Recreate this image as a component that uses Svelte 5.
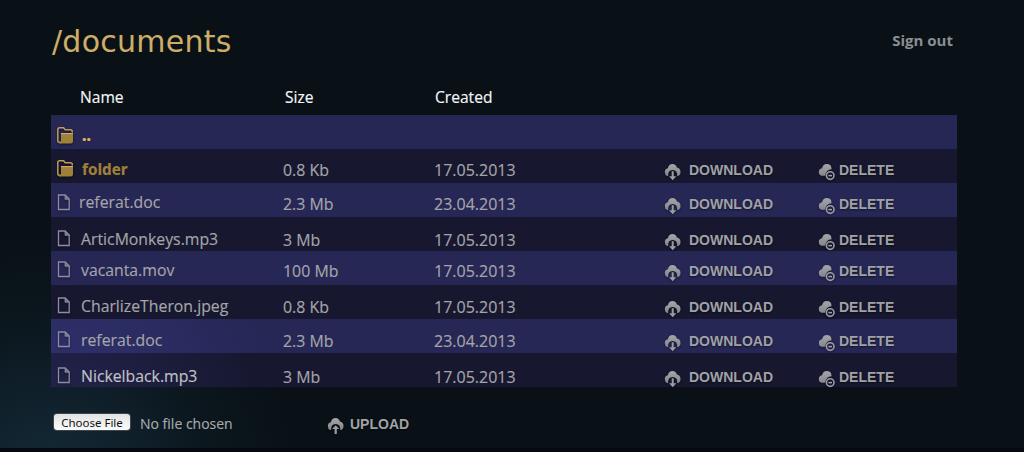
<script>
  const files = [
    { name: 'folder', kind: 'folder', size: '0.8 Kb', date: '17.05.2013', mid: 21, lift: 1, left: 31 },
    { name: 'referat.doc', kind: 'file', size: '2.3 Mb', date: '23.04.2013', mid: 21, lift: 2, left: 28 },
    { name: 'ArticMonkeys.mp3', kind: 'file', size: '3 Mb', date: '17.05.2013', mid: 23, lift: 1, left: 30 },
    { name: 'vacanta.mov', kind: 'file', size: '100 Mb', date: '17.05.2013', mid: 20, lift: 1, left: 30 },
    { name: 'CharlizeTheron.jpeg', kind: 'file', size: '0.8 Kb', date: '17.05.2013', mid: 22, lift: 1, left: 30 },
    { name: 'referat.doc', kind: 'file', size: '2.3 Mb', date: '23.04.2013', mid: 22, lift: 1, left: 30 },
    { name: 'Nickelback.mp3', kind: 'file bright', size: '3 Mb', date: '17.05.2013', mid: 24, lift: 1, left: 30 }
  ];
</script>

{#snippet folderIcon()}
  <svg class="folder-icon" width="18" height="18" viewBox="0 0 18 18">
    <path d="M4 15.5H2.6Q.8 15.5 .8 13.5V2.6Q.8 .8 2.6 .8H6.6L8.2 2.8H13.4Q15.3 2.8 15.3 4.8V5.5" fill="none" stroke="#bd9c53" stroke-width="1.5" />
    <path d="M4 6.3H16V14.2Q16 16.4 13.8 16.4H2.5Q1.6 16.2 1.6 14.6H4Z" fill="#a08138" />
    <path d="M4 6.6H16" stroke="#d3b76e" stroke-width="1" />
  </svg>
{/snippet}

{#snippet fileIcon()}
  <svg class="file-icon" width="14" height="18" viewBox="0 0 14 18">
    <path d="M1.5 1H8.2L12.2 5V15.5H1.5Z" fill="none" stroke="#8d8ca2" stroke-width="1.3" />
    <path d="M8 1V5.3H12.2Z" fill="#77768d" stroke="#8d8ca2" stroke-width=".8" />
  </svg>
{/snippet}

{#snippet cloudIcon(kind)}
  <svg class="cloud {kind}" width="18" height="18" viewBox="0 0 18 18">
    <defs>
      <linearGradient id="metal" x1="0" y1="0" x2="0" y2="1">
        <stop offset="0" stop-color="#a5a6a9" />
        <stop offset="1" stop-color="#85868c" />
      </linearGradient>
    </defs>
    {#if kind === 'delete'}
      <path d="M3.5 12.8Q.8 12.2 .8 9Q.8 5.8 4 5.3Q5 1 8.8 1Q13 1 13.4 4.7L13.6 6.2Q8 6.6 7 12.8Z" fill="url(#metal)" />
      <circle cx="12.2" cy="12.6" r="3.8" fill="none" stroke="#9b9ba2" stroke-width="1.6" />
      <path d="M10.4 12.6H14" stroke="#a2a2a8" stroke-width="1.5" />
    {:else}
      <path d="M3.3 13Q.8 12.2 .8 9Q.8 5.9 3.8 5.2Q5 1 8.5 1Q12 1 12.9 4.6Q16.5 5.2 16.5 9Q16.5 12.2 13.9 13H13.2Q13.6 7.2 8.7 7Q3.8 7.2 4.1 13Z" fill="url(#metal)" />
      {#if kind === 'upload'}
        <path d="M8.7 8.2L12.3 12.1H9.8V17H7.6V12.1H5.1Z" fill="#9b9ca0" />
      {:else}
        <path d="M7.7 8.3H9.7V13.2H12.3L8.7 17.2L5.1 13.2H7.7Z" fill="#9b9ca2" />
      {/if}
    {/if}
  </svg>
{/snippet}

<main>
  <header>
    <h1>/documents</h1>
    <a class="signout" href="#out">Sign out</a>
  </header>

  <section class="table">
    <div class="grid headings">
      <span>Name</span><span class="hsize">Size</span><span class="hdate">Created</span>
    </div>
    <div class="grid row parent">
      <div class="name folder">{@render folderIcon()}<b>..</b></div>
    </div>
    {#each files as file}
      <div class="grid row" style="--mid:{file.mid}px;--lift:{file.lift}px;--left:{file.left}px">
        <div class="name {file.kind}">
          {#if file.kind === 'folder'}{@render folderIcon()}{:else}{@render fileIcon()}{/if}
          <span class="label">{file.name}</span>
        </div>
        <span class="cell">{file.size}</span>
        <span class="cell date">{file.date}</span>
        <button class="action">{@render cloudIcon('download')}<span>DOWNLOAD</span></button>
        <button class="action remove">{@render cloudIcon('delete')}<span>DELETE</span></button>
      </div>
    {/each}
  </section>

  <footer>
    <button class="choose">Choose File</button>
    <span class="nofile">No file chosen</span>
    <button class="action send">{@render cloudIcon('upload')}<span>UPLOAD</span></button>
  </footer>
</main>

<style>
  :global(body) { background: #091117; }
  main {
    box-sizing: border-box;
    width: 1024px;
    height: 452px;
    padding: 0 67px 0 51px;
    overflow: hidden;
    background: radial-gradient(circle at 50px 480px, #142a38 0, #10212c 80px, #0b161d 165px, #091117 250px);
    border-bottom: 4px solid #05080f;
    font: 16px/20px "Open Sans", sans-serif;
    color: #a5a5a9;
    display: flex;
    flex-direction: column;
  }
  header { display: flex; justify-content: space-between; height: 82px; }
  h1 { margin: 22px 0 0 1px; font: 30px/40px "DejaVu Sans", sans-serif; letter-spacing: .25px; color: #cdae68; }
  .signout { margin: 30px 4px 0 0; color: #8b8e92; font-weight: 700; font-size: 15px; text-decoration: none; }
  .grid { display: grid; grid-template-columns: 232px 151px 229px 154px 1fr; }
  .headings { height: 33px; line-height: 30px; font-size: 15.6px; color: #f5f6f6; }
  .headings span:first-child { padding-left: 29px; }
  .hsize { padding-left: 2px; }
  .hdate { padding-left: 1px; }
  .row { height: 34px; box-sizing: border-box; background: #171830; align-items: start; }
  .row:nth-child(even) { background: #262755; }
  .row:nth-child(8) { background: radial-gradient(circle at 0 100px, #313271, #262755 230px); }
  .row:nth-child(9) { background: radial-gradient(circle at 0 90px, #242653, #171830 210px); }
  .name { display: grid; grid-template-columns: var(--left, 31px) 1fr; margin-top: calc(var(--mid) - var(--lift) - 10px); font-size: 15.8px; }
  .label, .cell, .headings, .nofile { -webkit-text-stroke: .15px currentColor; }
  .name.folder { color: #a08138; font-weight: 700; font-size: 15.3px; }
  .bright { color: #c1c2c4; }
  .folder-icon { margin: 1px 0 0 6px; filter: drop-shadow(0 1px 1px #0008); }
  .file-icon { margin: var(--lift) 0 0 6px; filter: drop-shadow(0 1px 1px #0006); }
  .parent .name { margin-top: 10px; }
  .parent .folder-icon { margin-top: 2px; }
  .parent b { color: #e1b44f; }
  .cell { margin-top: calc(var(--mid) - 10px); font-size: 15.9px; }
  .cell.date { font-size: 16px; }
  .action {
    display: flex; align-items: center; border: 0; padding: 0; background: none;
    margin: calc(var(--mid) - 9px) 0 0 1px; height: 18px;
    font: 700 14px/18px "Liberation Sans", sans-serif; color: #a1a2a6;
    text-shadow: 0 1px 2px #0008;
  }
  .action svg { flex: none; margin: 3px 7px 0 0; filter: drop-shadow(0 1px 1px #0006); }
  .action.remove svg { margin-right: 3px; }
  footer { display: flex; align-items: flex-start; padding: 27px 0 0 3px; }
  .choose {
    width: 76px; height: 16px; padding: 0; border: 0; border-radius: 3px;
    background: linear-gradient(#e2e3e3, #fafafa); color: #101010;
    box-shadow: 0 0 0 1px #3e464b; font: 11.5px/17px "Noto Sans", sans-serif;
  }
  .nofile { margin: 0 0 0 10px; width: 187px; font-size: 14px; color: #a7abae; }
  .action.send { margin: 1px 0 0; }
  .send svg { margin-right: 5px; }
</style>
